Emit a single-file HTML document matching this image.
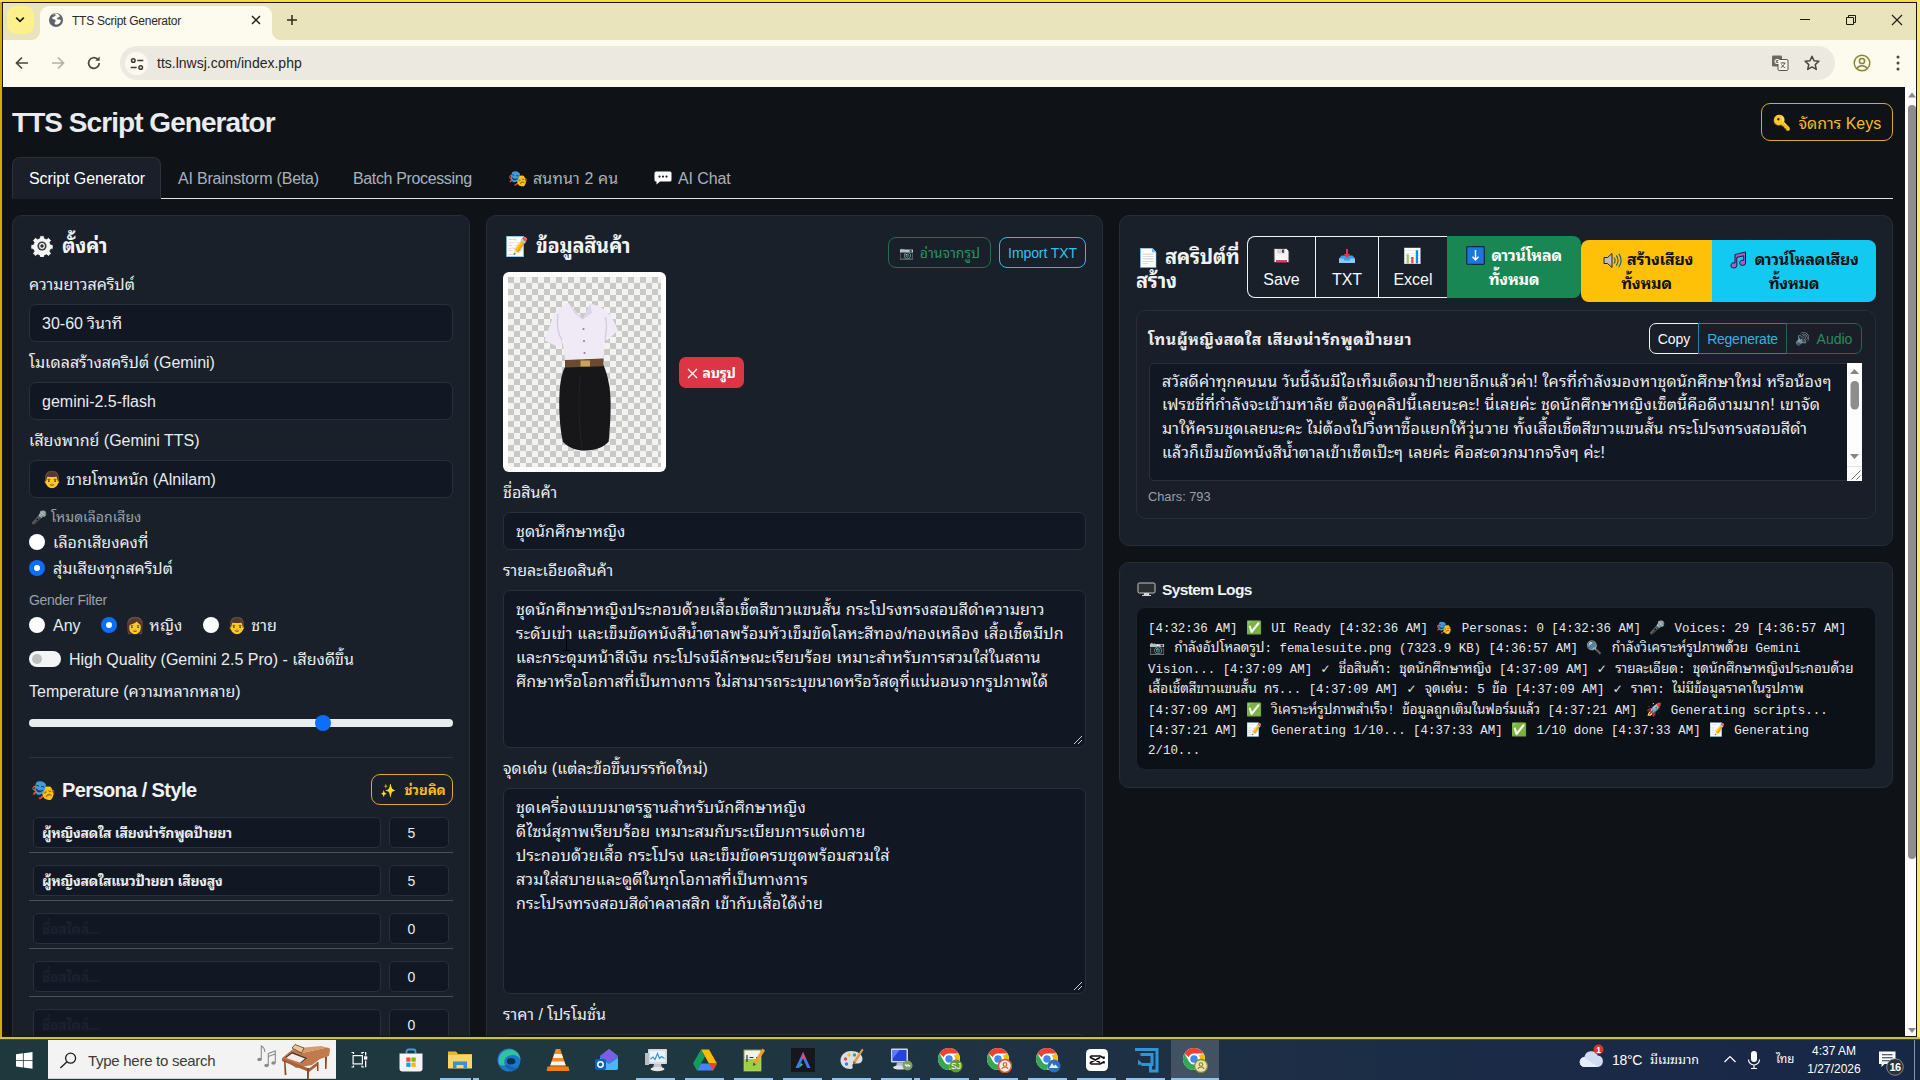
<!DOCTYPE html>
<html lang="th">
<head>
<meta charset="utf-8">
<title>TTS Script Generator</title>
<style>
*{box-sizing:border-box;margin:0;padding:0}
html,body{width:1920px;height:1080px;overflow:hidden;background:#0f1317}
body{position:relative;font-family:"Liberation Sans","Noto Sans Thai Looped","Noto Sans Thai UI","Noto Sans Thai","Loma","Noto Color Emoji",sans-serif;font-size:16px;line-height:24px;color:#e9ecef;-webkit-font-smoothing:antialiased}
.abs{position:absolute}
.em{font-family:"Noto Color Emoji","Liberation Sans",sans-serif}
svg{display:block}
svg.ic{display:inline-block}

/* ---------- window frame ---------- */
#frame-top{left:0;top:0;width:1920px;height:2px;background:#f3df3c}
#frame-left{left:0;top:2px;width:2px;height:1037px;background:#c8ae0e}
#frame-right{left:1917px;top:0;width:3px;height:1040px;background:#f6ea6e}
#frame-bottom{left:0;top:1037px;width:1920px;height:3px;background:#cabd5c;border-bottom:1px solid #4a4a2c}
#frame-in{left:2px;top:2px;width:1915px;height:1035px;border:1px solid #1a1604}

/* ---------- chrome ---------- */
#tabstrip{left:3px;top:3px;width:1913px;height:37px;background:#e9e4bc}
#toolbar{left:3px;top:40px;width:1913px;height:47px;background:#fdfaee}
#tabbtn{left:7px;top:6px;width:27px;height:28px;border-radius:9px;background:#fcf08c}
#tab{left:40px;top:6px;width:232px;height:34px;background:#fdfaee;border-radius:9px 9px 0 0}
#tab:before,#tab:after{content:"";position:absolute;bottom:0;width:8px;height:8px}
#tab:before{left:-8px;background:radial-gradient(circle at 0 0,rgba(0,0,0,0) 7.5px,#fdfaee 8px)}
#tab:after{right:-8px;background:radial-gradient(circle at 100% 0,rgba(0,0,0,0) 7.5px,#fdfaee 8px)}
#tabtitle{left:72px;top:11px;font-size:12px;line-height:20px;color:#2a2a26;white-space:nowrap;letter-spacing:-.25px}
#omni{left:120px;top:46px;width:1715px;height:34px;border-radius:17px;background:#ece9e0}
#siteinfo{left:125px;top:52px;width:23px;height:23px;border-radius:50%;background:#fbf9f1}
#url{left:157px;top:53px;font-size:14px;line-height:20px;color:#26251f;white-space:nowrap}

/* ---------- page ---------- */
#page{left:0;top:0;width:1905px;height:1037px;background:#0f1317;overflow:hidden}
#vscroll{left:1905px;top:87px;width:11px;height:949px;background:#fdfdfd}
#vthumb{left:1908px;top:105px;width:8px;height:754px;border-radius:4px;background:#8d8d8d}
h1{position:absolute;left:12px;top:103px;font-size:28px;line-height:40px;font-weight:bold;letter-spacing:-.95px;color:#e9ebee;white-space:nowrap}
.card{position:absolute;background:#1a202a;border:1px solid #272e39;border-radius:10px}
.lbl{position:absolute;margin-top:1px;white-space:nowrap;font-size:16px;line-height:24px;color:#e9ecef}
.small{font-size:14px;line-height:21px;color:#9aa1a9}
.ctl{position:absolute;background:#121724;border:1px solid #29303b;border-radius:7px;color:#e9ecef;white-space:nowrap;overflow:hidden}
.sel{height:38px;padding:7px 12px 5px;line-height:24px}
.btn{position:absolute;padding-top:2px;display:flex;align-items:center;justify-content:center;white-space:nowrap;border:1px solid transparent;border-radius:6px;font-size:14px;line-height:21px}

.h5{font-size:20px;line-height:24px;font-weight:bold;color:#f1f3f5}
.fw{font-weight:normal}
.radio{position:absolute;width:16px;height:16px;border-radius:50%;background:#fff}
.radio.on{background:#0d6efd}
.radio.on:after{content:"";position:absolute;left:5px;top:5px;width:6px;height:6px;border-radius:50%;background:#fff}
.pin{height:31px;padding:5px 8px 3px;letter-spacing:-.3px;font-size:14px;line-height:21px;font-weight:bold;border-radius:5px}
.num{text-align:center;font-weight:normal;padding-right:23px;letter-spacing:0}
.ph{color:#1c2231}
.sep{left:29px;width:424px;height:1px;background:#48505b}
.ta{padding:7px 12px 5px;line-height:24px;white-space:nowrap;letter-spacing:.17px}
.btn2{position:absolute;height:62px;padding:8px 0 0;text-align:center;white-space:nowrap;font-size:16px;line-height:24px;color:#f8f9fa}
.btn2.b{font-weight:bold;letter-spacing:-.3px}
.logbox{background:#0c1017;border:1px solid #1d232d;border-radius:9px;padding:11px 11px;font-family:"Liberation Mono","Noto Sans Thai Looped","Noto Sans Thai UI","Loma","Noto Color Emoji",monospace;font-size:12.450px;line-height:20.400px;color:#e6e9ec;white-space:nowrap;overflow:hidden}
.logbox div{height:20.400px;line-height:20.400px}
.logbox span{line-height:0}
.logbox .e{display:inline-block;font-family:"Noto Color Emoji","Liberation Sans",sans-serif;font-size:13px;width:18.800px;text-align:center}
.logbox .th{font-family:"Noto Sans Thai Looped","Noto Sans Thai UI","Loma",sans-serif;font-size:13.500px}
.logbox .ck{display:inline-block;font-family:"DejaVu Sans","Liberation Sans",sans-serif;font-size:12px;width:11.600px;text-align:center}

/* ---------- taskbar ---------- */
#taskbar{left:0;top:1040px;width:1920px;height:40px;background:linear-gradient(90deg,#1f383d 0%,#1f3740 35%,#1e3044 60%,#1a2a47 80%,#172746 100%)}
.tray{color:#fff;white-space:nowrap;line-height:20px}
</style>
</head>
<body>
<div class="abs" id="page">
<h1>TTS Script Generator</h1>
<div class="btn" style="left:1761px;top:103px;width:132px;height:38px;border-color:#d9ab2c;border-radius:9px;color:#f6bd1c;font-size:16px"><span class="em" style="font-size:15px;margin-right:7px;display:inline-block;transform:scaleX(-1)">🔑</span>จัดการ Keys</div>

<!-- nav tabs -->
<div class="abs" style="left:12px;top:198px;width:1881px;height:1px;background:#dfe3e8"></div>
<div class="abs" style="left:12px;top:157px;width:149px;height:42px;background:#1a1f2a;border:1px solid #2b323d;border-bottom-color:#1a1f2a;border-radius:8px 8px 0 0"></div>
<div class="lbl" style="left:29px;top:166px;color:#fff;letter-spacing:-.08px">Script Generator</div>
<div class="lbl" style="left:178px;top:166px;color:#a7b2bb;letter-spacing:-.2px">AI Brainstorm (Beta)</div>
<div class="lbl" style="left:353px;top:166px;color:#a7b2bb;letter-spacing:-.36px">Batch Processing</div>
<div class="lbl" style="left:508px;top:166px;color:#a7b2bb"><span class="em" style="font-size:16px">🎭</span></div>
<div class="lbl" style="left:533px;top:166px;color:#a7b2bb;letter-spacing:.1px">สนทนา 2 คน</div>
<svg class="abs" style="left:654px;top:171px" width="18" height="14" viewBox="0 0 18 14"><path d="M2 .5h14a1.500 1.500 0 0 1 1.500 1.500v7a1.500 1.500 0 0 1-1.500 1.500H6l-3.500 3v-3H2A1.500 1.500 0 0 1 .5 9V2A1.500 1.500 0 0 1 2 .5z" fill="#fff"/><circle cx="5.500" cy="5.600" r="1.100" fill="#222"/><circle cx="9" cy="5.600" r="1.100" fill="#222"/><circle cx="12.500" cy="5.600" r="1.100" fill="#222"/></svg>
<div class="lbl" style="left:678px;top:166px;color:#a7b2bb;letter-spacing:-.1px">AI Chat</div>

<!-- cards -->
<div class="card" style="left:12px;top:215px;width:458px;height:900px"></div>
<div class="card" style="left:486px;top:215px;width:617px;height:900px"></div>
<div class="card" style="left:1119px;top:215px;width:774px;height:331px"></div>
<div class="card" style="left:1119px;top:562px;width:774px;height:226px"></div>

<!-- ===== LEFT CARD ===== -->
<svg class="abs" style="left:31px;top:235px" width="22" height="22" viewBox="0 0 22 22"><g transform="translate(11 11)"><g fill="#f4f4f4" stroke="#16191f" stroke-width=".8"><path d="M-2-10.300h4l.5 2.500 1.900.8 2.100-1.400 2.800 2.800-1.400 2.100.8 1.900 2.500.5v4l-2.500.5-.8 1.900 1.400 2.100-2.800 2.800-2.100-1.400-1.900.8-.5 2.500h-4l-.5-2.500-1.900-.8-2.100 1.400-2.800-2.800 1.400-2.100-.8-1.900-2.500-.5v-4l2.500-.5.8-1.900-1.400-2.100 2.800-2.800 2.100 1.400 1.900-.8z"/></g><circle r="4.600" fill="#3a3d44"/><circle r="2.900" fill="#f4f4f4"/><circle r="1.700" fill="#2a2d33"/></g></svg>
<div class="lbl h5" style="left:62px;top:233px;letter-spacing:-.35px">ตั้งค่า</div>
<div class="lbl fw" style="left:29px;top:272px">ความยาวสคริปต์</div>
<div class="ctl sel" style="left:29px;top:304px;width:424px">30-60 วินาที</div>
<div class="lbl fw" style="left:29px;top:350px">โมเดลสร้างสคริปต์ (Gemini)</div>
<div class="ctl sel" style="left:29px;top:382px;width:424px">gemini-2.5-flash</div>
<div class="lbl fw" style="left:29px;top:428px">เสียงพากย์ (Gemini TTS)</div>
<div class="ctl sel" style="left:29px;top:460px;width:424px"><span class="em" style="font-size:16px">👨</span> ชายโทนหนัก (Alnilam)</div>

<div class="lbl small" style="left:31px;top:506px"><span class="em" style="font-size:13px">🎤</span> โหมดเลือกเสียง</div>
<div class="radio" style="left:29px;top:534px"></div>
<div class="lbl" style="left:53px;top:530px">เลือกเสียงคงที่</div>
<div class="radio on" style="left:29px;top:560px"></div>
<div class="lbl" style="left:53px;top:556px">สุ่มเสียงทุกสคริปต์</div>

<div class="lbl small" style="left:29px;top:589px;letter-spacing:-.3px">Gender Filter</div>
<div class="radio" style="left:29px;top:617px"></div>
<div class="lbl" style="left:53px;top:613px">Any</div>
<div class="radio on" style="left:101px;top:617px"></div>
<div class="lbl" style="left:125px;top:613px"><span class="em" style="font-size:16px">👩</span> หญิง</div>
<div class="radio" style="left:203px;top:617px"></div>
<div class="lbl" style="left:227px;top:613px"><span class="em" style="font-size:16px">👨</span> ชาย</div>

<div class="abs" style="left:29px;top:651px;width:32px;height:16px;border-radius:8px;background:#f4f5f6"><div class="abs" style="left:3px;top:3px;width:10px;height:10px;border-radius:50%;background:#bfbfbf"></div></div>
<div class="lbl" style="left:69px;top:647px">High Quality (Gemini 2.5 Pro) - เสียงดีขึ้น</div>

<div class="lbl" style="left:29px;top:679px">Temperature (ความหลากหลาย)</div>
<div class="abs" style="left:29px;top:719px;width:424px;height:8px;border-radius:4px;background:#e9ecef"></div>
<div class="abs" style="left:315px;top:715px;width:16px;height:16px;border-radius:50%;background:#0d6efd"></div>

<div class="abs" style="left:29px;top:757px;width:424px;height:1px;background:#2d343f"></div>

<div class="lbl h5" style="left:31px;top:777px"><span class="em" style="font-size:20px">🎭</span></div>
<div class="lbl h5" style="left:62px;top:777px;letter-spacing:-.6px">Persona / Style</div>
<div class="btn" style="left:371px;top:774px;width:82px;height:31px;border-color:#d9ab2c;border-radius:9px;color:#f6bd1c;font-weight:bold;font-size:13.500px;letter-spacing:-.1px"><span class="em" style="font-size:13px;margin-left:2px;margin-right:8px;font-weight:normal">✨</span>ช่วยคิด</div>

<div class="ctl pin" style="left:33px;top:817px;width:348px">ผู้หญิงสดใส เสียงน่ารักพูดป้ายยา</div>
<div class="ctl pin num" style="left:389px;top:817px;width:60px">5</div>
<div class="abs sep" style="top:852px"></div>
<div class="ctl pin" style="left:33px;top:865px;width:348px">ผู้หญิงสดใสแนวป้ายยา เสียงสูง</div>
<div class="ctl pin num" style="left:389px;top:865px;width:60px">5</div>
<div class="abs sep" style="top:900px"></div>
<div class="ctl pin ph" style="left:33px;top:913px;width:348px">ชื่อสไตล์...</div>
<div class="ctl pin num" style="left:389px;top:913px;width:60px">0</div>
<div class="abs sep" style="top:948px"></div>
<div class="ctl pin ph" style="left:33px;top:961px;width:348px">ชื่อสไตล์...</div>
<div class="ctl pin num" style="left:389px;top:961px;width:60px">0</div>
<div class="abs sep" style="top:996px"></div>
<div class="ctl pin ph" style="left:33px;top:1009px;width:348px">ชื่อสไตล์...</div>
<div class="ctl pin num" style="left:389px;top:1009px;width:60px">0</div>

<!-- ===== CENTER CARD ===== -->
<div class="lbl h5" style="left:505px;top:233px"><span class="em" style="font-size:19px">📝</span></div>
<div class="lbl h5" style="left:536px;top:233px;letter-spacing:-.3px">ข้อมูลสินค้า</div>
<div class="btn" style="left:888px;top:237px;width:103px;height:31px;border-color:#256f4f;border-radius:8px;color:#2b9363"><span class="em" style="font-size:12px;margin-right:6px">📷</span>อ่านจากรูป</div>
<div class="btn" style="left:999px;top:237px;width:87px;height:31px;border-color:#2fbce9;border-radius:8px;color:#35c1ee;letter-spacing:-.1px">Import TXT</div>

<div class="abs" style="left:503px;top:272px;width:163px;height:200px;background:#fff;border-radius:6px"></div>
<svg class="abs" style="left:508px;top:277px" width="153" height="190" viewBox="0 0 153 190">
<defs><pattern id="chk" width="12" height="12" patternUnits="userSpaceOnUse"><rect width="12" height="12" fill="#f3f3f1"/><rect width="6" height="6" fill="#c9c9c7"/><rect x="6" y="6" width="6" height="6" fill="#c9c9c7"/></pattern></defs>
<rect width="153" height="190" fill="url(#chk)"/>
<!-- skirt -->
<path d="M57 90 C53 98 51.500 108 51.200 125 C51.200 140 52.500 155 55 165 C62 172 70 173.500 78 173.500 C88 173.500 96 170 100.700 164.500 C102 150 102.800 138 102.600 125 C102.300 112 100.500 100 95.500 88 Z" fill="#17171a"/>
<path d="M72 100 C70 125 71 150 74 171" stroke="#222226" stroke-width="1.200" fill="none"/>
<!-- shirt -->
<path d="M60.400 26 L52 31 C48 33.500 46 36 45 40 C42 48 39 56 36.600 63.500 L52 71 L54 63 C55.500 70 56.500 76 57 83 L95.500 81.600 C96 74 96.500 68 97 61.500 L99 63.500 L110 53.500 C107 46 104 40 100 36 C97 32.500 93 30 89 28.500 L82.200 26.500 L74.700 42.500 Z" fill="#efeaf6"/>
<path d="M60.400 26 L74.700 42.500 L67 37 Z M82.200 26.500 L74.700 42.500 L84 36 Z" fill="#dcd5e9"/>
<path d="M50 37 C48.500 48 50.500 58 54 63 M97.500 40 C99 48 98.500 55 97 61.500" stroke="#d3cce0" stroke-width="1.400" fill="none"/>
<circle cx="75.500" cy="52" r="1.100" fill="#8a8494"/><circle cx="76" cy="64" r="1.100" fill="#8a8494"/><circle cx="76.500" cy="76" r="1.100" fill="#8a8494"/>
<!-- belt -->
<path d="M57 83 L95.500 81.600 L95.500 89.300 L57 90.500 Z" fill="#6b4a32"/>
<rect x="72.500" y="83.500" width="9.500" height="6" fill="#c9a55c"/>
</svg>
<div class="btn" style="left:679px;top:357px;width:65px;height:31px;background:#dc3545;color:#fff;border-radius:7px;font-weight:bold;letter-spacing:-.3px"><svg width="11" height="11" viewBox="0 0 11 11" style="margin-right:4px"><path d="M1 1l9 9M10 1l-9 9" stroke="#fff" stroke-width="1.300"/></svg>ลบรูป</div>

<div class="lbl" style="left:503px;top:480px">ชื่อสินค้า</div>
<div class="ctl sel" style="left:503px;top:512px;width:583px">ชุดนักศึกษาหญิง</div>
<div class="lbl" style="left:503px;top:558px">รายละเอียดสินค้า</div>
<div class="ctl ta" style="left:503px;top:590px;width:583px;height:158px">ชุดนักศึกษาหญิงประกอบด้วยเสื้อเชิ้ตสีขาวแขนสั้น กระโปรงทรงสอบสีดำความยาว<br>ระดับเข่า และเข็มขัดหนังสีน้ำตาลพร้อมหัวเข็มขัดโลหะสีทอง/ทองเหลือง เสื้อเชิ้ตมีปก<br>และกระดุมหน้าสีเงิน กระโปรงมีลักษณะเรียบร้อย เหมาะสำหรับการสวมใส่ในสถาน<br>ศึกษาหรือโอกาสที่เป็นทางการ ไม่สามารถระบุขนาดหรือวัสดุที่แน่นอนจากรูปภาพได้</div>
<svg class="abs" style="left:1073px;top:735px" width="10" height="10" viewBox="0 0 10 10"><path d="M9 1L1 9M9 5L5 9" stroke="#c9ced4" stroke-width="1"/></svg>
<div class="lbl" style="left:503px;top:756px">จุดเด่น (แต่ละข้อขึ้นบรรทัดใหม่)</div>
<div class="ctl ta" style="left:503px;top:788px;width:583px;height:206px">ชุดเครื่องแบบมาตรฐานสำหรับนักศึกษาหญิง<br>ดีไซน์สุภาพเรียบร้อย เหมาะสมกับระเบียบการแต่งกาย<br>ประกอบด้วยเสื้อ กระโปรง และเข็มขัดครบชุดพร้อมสวมใส่<br>สวมใส่สบายและดูดีในทุกโอกาสที่เป็นทางการ<br>กระโปรงทรงสอบสีดำคลาสสิก เข้ากับเสื้อได้ง่าย</div>
<svg class="abs" style="left:1073px;top:981px" width="10" height="10" viewBox="0 0 10 10"><path d="M9 1L1 9M9 5L5 9" stroke="#c9ced4" stroke-width="1"/></svg>
<div class="lbl" style="left:503px;top:1002px">ราคา / โปรโมชั่น</div>
<div class="ctl sel" style="left:503px;top:1034px;width:583px"></div>

<!-- ===== RIGHT TOP CARD ===== -->
<div class="lbl h5" style="left:1137px;top:244px"><span class="em" style="font-size:18px">📄</span></div>
<div class="lbl h5" style="left:1165px;top:244px;letter-spacing:-.3px">สคริปต์ที่</div>
<div class="lbl h5" style="left:1136px;top:268px;letter-spacing:-.3px">สร้าง</div>

<div class="abs" style="left:1247px;top:236px;width:201px;height:62px;border:1px solid #f1f3f5;border-right:0;border-radius:8px 0 0 8px"></div>
<div class="abs" style="left:1315px;top:237px;width:1px;height:60px;background:#f1f3f5"></div>
<div class="abs" style="left:1378px;top:237px;width:1px;height:60px;background:#f1f3f5"></div>
<svg class="abs" style="left:1273px;top:247px" width="17" height="17" viewBox="0 0 17 17"><path d="M1 1.500h12.500L16 4v11.500H1z" fill="#f4f4f6" stroke="#3a3340" stroke-width="1"/><rect x="4" y="2" width="8" height="4.500" fill="#d7d3dc"/><rect x="9" y="2.600" width="2" height="3.200" fill="#4a4450"/><rect x="3" y="9.500" width="11" height="5.500" fill="#fff"/><rect x="3" y="13" width="11" height="2.300" fill="#e0406a"/></svg>
<div class="btn2" style="left:1248px;top:236px;width:67px"><br>Save</div>
<svg class="abs" style="left:1338px;top:249px" width="18" height="15" viewBox="0 0 18 15"><path d="M1 9.500L3.500 6.500h11L17 9.500V14H1z" fill="#3a9be6"/><path d="M1 9.500h4.500l1 2h5l1-2H17V14H1z" fill="#8cc9f5"/><path d="M8 0h2v5h2.300L9 9 5.700 5H8z" fill="#e2383f"/></svg>
<div class="btn2" style="left:1316px;top:236px;width:62px"><br>TXT</div>
<div class="btn2" style="left:1379px;top:236px;width:68px"><span class="em" style="font-size:15px">📊</span><br>Excel</div>
<div class="btn2 b" style="left:1447px;top:236px;width:134px;background:#198754;border-radius:0 8px 8px 0;color:#fff"><svg class="ic" width="19" height="19" viewBox="0 0 19 19" style="vertical-align:-4px;margin-right:2px"><rect x=".7" y=".7" width="17.600" height="17.600" rx="1" fill="#1b78d8" stroke="#0b2a4d" stroke-width="1.200"/><path d="M9.500 4v9.500M6.500 10.800l3 3.200 3-3.200" fill="none" stroke="#fff" stroke-width="1.400"/></svg> ดาวน์โหลด<br>ทั้งหมด</div>
<div class="btn2 b" style="left:1581px;top:240px;width:131px;background:#ffc107;border-radius:8px 0 0 8px;color:#111"><svg class="ic" width="19" height="17" viewBox="0 0 19 17" style="vertical-align:-4px;margin-left:3px;margin-right:1px"><path d="M1 5.500h3.500L9 1.500v14L4.500 11.500H1z" fill="#bdbdbd" stroke="#222" stroke-width="1"/><path d="M11 5.500c1.300 1.700 1.300 4.300 0 6M13.300 3.500c2.300 2.800 2.300 7.200 0 10M15.700 1.800c3.200 3.800 3.200 9.600 0 13.400" fill="none" stroke="#1f5f86" stroke-width="1.200"/></svg> สร้างเสียง<br>ทั้งหมด</div>
<div class="btn2 b" style="left:1712px;top:240px;width:164px;background:#12caf1;border-radius:0 8px 8px 0;color:#111"><svg class="ic" width="19" height="18" viewBox="0 0 19 18" style="vertical-align:-4px;margin-right:2px"><path d="M6 3.500l10.500-2.500v10.800a2.900 2.600 0 1 1-1.800-2.400V4.800L7.800 6.400v8a2.900 2.600 0 1 1-1.800-2.400z" fill="#9a62d2" stroke="#24142f" stroke-width="1" stroke-linejoin="round"/></svg> ดาวน์โหลดเสียง<br>ทั้งหมด</div>

<div class="abs" style="left:1136px;top:310px;width:740px;height:209px;border:1px solid #272e39;border-radius:10px;background:#191e29"></div>
<div class="lbl" style="left:1148px;top:327px;font-weight:bold;letter-spacing:.42px">โทนผู้หญิงสดใส เสียงน่ารักพูดป้ายยา</div>
<div class="btn" style="left:1649px;top:323px;width:50px;height:31px;border-color:#f1f3f5;border-radius:7px 0 0 7px;color:#f8f9fa">Copy</div>
<div class="btn" style="left:1698px;top:323px;width:89px;height:31px;border-color:#1c88a6;border-radius:0;color:#2db5dc;letter-spacing:-.25px">Regenerate</div>
<div class="btn" style="left:1786px;top:323px;width:76px;height:31px;border-color:#1d6a4b;border-radius:0 7px 7px 0;color:#2a8c60"><span class="em" style="font-size:12px;margin-right:6px;opacity:.75">🔊</span>Audio</div>

<div class="ctl" style="left:1149px;top:363px;width:713px;height:118px;padding:5.500px 12px;font-size:16px;line-height:23.700px;letter-spacing:.15px;border-radius:5px">สวัสดีค่าทุกคนนน วันนี้ฉันมีไอเท็มเด็ดมาป้ายยาอีกแล้วค่า! ใครที่กำลังมองหาชุดนักศึกษาใหม่ หรือน้องๆ<br>เฟรชชี่ที่กำลังจะเข้ามหาลัย ต้องดูคลิปนี้เลยนะคะ! นี่เลยค่ะ ชุดนักศึกษาหญิงเซ็ตนี้คือดีงามมาก! เขาจัด<br>มาให้ครบชุดเลยนะคะ ไม่ต้องไปวิ่งหาซื้อแยกให้วุ่นวาย ทั้งเสื้อเชิ้ตสีขาวแขนสั้น กระโปรงทรงสอบสีดำ<br>แล้วก็เข็มขัดหนังสีน้ำตาลเข้าเซ็ตเป๊ะๆ เลยค่ะ คือสะดวกมากจริงๆ ค่ะ!</div>
<div class="abs" style="left:1847px;top:363px;width:15px;height:118px;background:#fdfdfd"></div>
<svg class="abs" style="left:1847px;top:363px" width="15" height="118" viewBox="0 0 15 118"><path d="M3 11L7.500 6 12 11zM3 91L7.500 96 12 91z" fill="#858585"/><rect x="3.500" y="18" width="8.500" height="28.500" rx="4.200" fill="#8d8d8d"/><path d="M0 103.500h15" stroke="#e4e4e4" stroke-width="1"/><path d="M13.500 107.500L4.500 116.500M13.500 112.500L9.500 116.500" stroke="#6f6f6f" stroke-width="1"/></svg>
<div class="lbl" style="left:1148px;top:486px;font-size:12.800px;line-height:20px;color:#99a0a8">Chars: 793</div>

<!-- ===== SYSTEM LOGS ===== -->
<svg class="abs" style="left:1137px;top:582px" width="19" height="15" viewBox="0 0 19 15"><rect x="1" y="1" width="17" height="10" rx="1.200" fill="#2b2e31" stroke="#c4c4c4" stroke-width="1"/><path d="M7.500 11.500h4v1.500h-4zM5 13.500h9" stroke="#d6d6d6" stroke-width="1.200" fill="#d6d6d6"/></svg>
<div class="lbl" style="left:1162px;top:577px;font-size:15.500px;font-weight:bold;letter-spacing:-.6px;color:#f1f3f5">System Logs</div>
<div class="abs logbox" style="left:1136px;top:607px;width:740px;height:163px">
<div>[4:32:36 AM] <span class="e">✅</span> UI Ready [4:32:36 AM] <span class="e">🎭</span> Personas: 0 [4:32:36 AM] <span class="e">🎤</span> Voices: 29 [4:36:57 AM]</div>
<div><span class="e">📷</span> <span class="th">กำลังอัปโหลดรูป</span>: femalesuite.png (7323.9 KB) [4:36:57 AM] <span class="e">🔍</span> <span class="th">กำลังวิเคราะห์รูปภาพด้วย</span> Gemini</div>
<div>Vision... [4:37:09 AM] <span class="ck">✓</span> <span class="th">ชื่อสินค้า</span>: <span class="th">ชุดนักศึกษาหญิง</span> [4:37:09 AM] <span class="ck">✓</span> <span class="th">รายละเอียด</span>: <span class="th">ชุดนักศึกษาหญิงประกอบด้วย</span></div>
<div><span class="th">เสื้อเชิ้ตสีขาวแขนสั้น</span> <span class="th">กร</span>... [4:37:09 AM] <span class="ck">✓</span> <span class="th">จุดเด่น</span>: 5 <span class="th">ข้อ</span> [4:37:09 AM] <span class="ck">✓</span> <span class="th">ราคา</span>: <span class="th">ไม่มีข้อมูลราคาในรูปภาพ</span></div>
<div>[4:37:09 AM] <span class="e">✅</span> <span class="th">วิเคราะห์รูปภาพสำเร็จ</span>! <span class="th">ข้อมูลถูกเติมในฟอร์มแล้ว</span> [4:37:21 AM] <span class="e">🚀</span> Generating scripts...</div>
<div>[4:37:21 AM] <span class="e">📝</span> Generating 1/10... [4:37:33 AM] <span class="e">✅</span> 1/10 done [4:37:33 AM] <span class="e">📝</span> Generating</div>
<div>2/10...</div>
</div>
<!-- text cursor (I-beam) -->
<div class="abs" style="left:566px;top:633px;width:1px;height:17px;background:#000"></div>
<div class="abs" style="left:563px;top:650px;width:7px;height:1px;background:#000"></div>
</div>
<div class="abs" id="tabstrip"></div>
<div class="abs" id="toolbar"></div>
<div class="abs" id="vscroll"></div>
<div class="abs" id="vthumb"></div>
<svg class="abs" style="left:1905px;top:87px" width="11" height="949" viewBox="0 0 11 949"><path d="M3 10.500L7 5.500 11 10.500zM3 941L7 946 11 941z" fill="#8a8a8a"/></svg>
<div class="abs" id="tabbtn"></div>
<svg class="abs" style="left:14px;top:15px" width="12" height="10" viewBox="0 0 12 10"><path d="M2.2 2.6 L6 6.4 L9.8 2.6" fill="none" stroke="#1d1b10" stroke-width="1.7"/></svg>
<div class="abs" id="tab"></div>
<svg class="abs" style="left:48px;top:12px" width="16" height="16" viewBox="0 0 16 16"><circle cx="8" cy="8" r="7" fill="#5f6370"/><path d="M4.2 3.2c1.2-.9 2.7-1.1 3.3-.6.7.6-.2 1.500-1.100 2-.9.500-1.800.4-2.200 1.200-.4.800.5 1.400 1.600 1.500 1.100.1 1.900.6 1.800 1.600-.1 1-1.100 1.300-1 2.300.1.800.700 1.300 1.400 1.500 2.600-.1 4.600-2 5-4.500-.500-.7-1.300-.9-2.100-.7-.9.200-1.700-.2-1.800-1-.1-.8.700-1.200 1.500-1.300.8-.1 1.300-.6 1.100-1.300C10.600 2 9.300 1.500 8 1.500c-1.500 0-2.800.6-3.800 1.700z" fill="#fdfaee"/></svg>
<div class="abs" id="tabtitle">TTS Script Generator</div>
<svg class="abs" style="left:250px;top:14px" width="12" height="12" viewBox="0 0 12 12"><path d="M2 2l8 8M10 2l-8 8" stroke="#25231a" stroke-width="1.5"/></svg>
<svg class="abs" style="left:285px;top:13px" width="14" height="14" viewBox="0 0 14 14"><path d="M7 2v10M2 7h10" stroke="#2b2a20" stroke-width="1.5"/></svg>
<svg class="abs" style="left:1799px;top:13px" width="12" height="12" viewBox="0 0 12 12"><path d="M1 6.500h10" stroke="#1b1a12" stroke-width="1"/></svg>
<svg class="abs" style="left:1845px;top:14px" width="12" height="12" viewBox="0 0 12 12"><path d="M1.500 3.500h7v7h-7zM3.500 3.500v-2h7v7h-2" fill="none" stroke="#1b1a12" stroke-width="1"/></svg>
<svg class="abs" style="left:1891px;top:14px" width="12" height="12" viewBox="0 0 12 12"><path d="M1 1l10 10M11 1L1 11" stroke="#1b1a12" stroke-width="1.100"/></svg>

<svg class="abs" style="left:14px;top:55px" width="16" height="16" viewBox="0 0 16 16"><path d="M14 8H3M8 2.500L2.500 8 8 13.500" fill="none" stroke="#4a4838" stroke-width="1.700"/></svg>
<svg class="abs" style="left:50px;top:55px" width="16" height="16" viewBox="0 0 16 16"><path d="M2 8h11M8 2.500L13.500 8 8 13.500" fill="none" stroke="#b3b1a4" stroke-width="1.700"/></svg>
<svg class="abs" style="left:86px;top:55px" width="16" height="16" viewBox="0 0 16 16"><path d="M13.200 8A5.300 5.300 0 1 1 11.600 4.200" fill="none" stroke="#4a4838" stroke-width="1.700"/><path d="M13.600 1.600v4.200H9.400z" fill="#4a4838"/></svg>
<div class="abs" id="omni"></div>
<div class="abs" id="siteinfo"></div>
<svg class="abs" style="left:129px;top:56px" width="16" height="16" viewBox="0 0 16 16"><g fill="none" stroke="#3d3b2e" stroke-width="1.500"><circle cx="4.300" cy="4.500" r="1.800"/><path d="M8.300 4.500h6"/><circle cx="11.700" cy="11.500" r="1.800"/><path d="M1.700 11.500h6"/></g></svg>
<div class="abs" id="url">tts.lnwsj.com/index.php</div>
<svg class="abs" style="left:1771px;top:54px" width="18" height="18" viewBox="0 0 18 18"><rect x="1" y="1.500" width="10" height="11" rx="1.200" fill="#6b6a62"/><rect x="7" y="5.500" width="10" height="11" rx="1.200" fill="#f7f5ec" stroke="#55544c" stroke-width="1"/><text x="3.200" y="10" font-size="7.500" font-weight="bold" fill="#fff" font-family="Liberation Sans,sans-serif">G</text><path d="M9.500 9h5M12 8v1M13.700 9c-.5 2-2 3.700-4 4.700M10.500 10.500c.8 1.500 2 2.700 3.700 3.300" stroke="#55544c" stroke-width=".9" fill="none"/></svg>
<svg class="abs" style="left:1803px;top:54px" width="18" height="18" viewBox="0 0 18 18"><path d="M9 2.300l2 4.500 4.900.5-3.700 3.300 1.100 4.800L9 12.900l-4.300 2.500 1.100-4.800L2.100 7.300l4.900-.5z" fill="none" stroke="#4a4838" stroke-width="1.500" stroke-linejoin="round"/></svg>
<svg class="abs" style="left:1852px;top:53px" width="20" height="20" viewBox="0 0 20 20"><g fill="none" stroke="#8a8535" stroke-width="1.500"><circle cx="10" cy="10" r="7.800"/><circle cx="10" cy="8" r="2.600"/><path d="M4.800 15.600c1.200-2 3-2.900 5.200-2.900s4 .9 5.200 2.900"/></g></svg>
<svg class="abs" style="left:1895px;top:54px" width="6" height="18" viewBox="0 0 6 18"><g fill="#4a4838"><circle cx="3" cy="3" r="1.500"/><circle cx="3" cy="9" r="1.500"/><circle cx="3" cy="15" r="1.500"/></g></svg>


<div class="abs" id="taskbar"></div>
<svg class="abs" style="left:16px;top:1052px" width="17" height="17" viewBox="0 0 17 17"><path d="M0 2.300L6.900 1.300V8H0zM7.700 1.200L16.500 0V8H7.700zM0 8.800H6.900V15.500L0 14.500zM7.700 8.800H16.500V16.800L7.700 15.600z" fill="#fff"/></svg>
<div class="abs" style="left:48px;top:1040px;width:288px;height:39px;background:#f3f3f3;border-bottom:1px solid #cfcfcf"></div>
<svg class="abs" style="left:58px;top:1050px" width="20" height="20" viewBox="0 0 20 20"><circle cx="12.600" cy="8.200" r="5" fill="none" stroke="#1f1f1f" stroke-width="1.300"/><path d="M9 11.800L2.400 18" stroke="#1f1f1f" stroke-width="1.400"/></svg>
<div class="abs" style="left:88px;top:1051px;font-size:15px;line-height:20px;letter-spacing:-.28px;color:#3b3b3b;white-space:nowrap">Type here to search</div>
<svg class="abs" style="left:255px;top:1042px" width="80" height="38" viewBox="0 0 80 38"><g fill="#8b8b8b" stroke="#8b8b8b"><ellipse cx="4.500" cy="17.500" rx="2.300" ry="1.800" stroke="none"/><path d="M6.300 17.500V4c2 1 3.500 3 3.500 6" fill="none" stroke-width="1.100"/><ellipse cx="11.500" cy="23.500" rx="2.200" ry="1.700" stroke="none"/><ellipse cx="18.500" cy="21" rx="2.200" ry="1.700" stroke="none"/><path d="M13.300 23.500V11.500l7-2.500V21M13.300 14.500l7-2.500" fill="none" stroke-width="1.100"/></g><path d="M27 16L38 7l9 4 25-5.500c2 0 3 1 3 2.500l-1 6-9 3-8 6-16 3z" fill="#c07a4e"/><path d="M38 7l9 4 25-5.500-6-1.500-22 2z" fill="#d99a6c"/><path d="M27 16l27 10.500 8-6 .5 3-8.500 6.500L27 19z" fill="#a9623a"/><path d="M30 15.500l7-5.500 15 6-6 5z" fill="#3b3330"/><path d="M31 16l6-4.600 13 5.200-5 4.200z" fill="#f1ece6"/><path d="M37 6l3-3.500 9 3.500-2.500 5z" fill="#e9c98f" stroke="#5a3a22" stroke-width=".8"/><path d="M29 19l1.500 0 1 14-1.800 0zM52 26l2.200 0 -.4 11-1.800 0zM70 15l2 0-.5 12-1.500 0zM62 20l1.500 0 0 9-1.500 0z" fill="#8a4a2a"/></svg>
<svg class="abs" style="left:351px;top:1051px" width="18" height="18" viewBox="0 0 18 18"><g fill="none" stroke="#fff" stroke-width="1.200"><rect x="2.100" y="4.600" width="9.300" height="8.300"/><path d="M.5 1.500h2v1.600M13 1.500h-2v1.600M.5 16h2v-1.600M13 16h-2v-1.600"/></g><rect x="14" y="1" width="1.300" height="3.500" fill="#fff"/><rect x="13" y="5.300" width="3.300" height="3.300" fill="#fff"/><rect x="14" y="9.600" width="1.300" height="6.600" fill="#fff"/></svg>
<svg class="abs" style="left:397.5px;top:1047px" width="26" height="26" viewBox="0 0 26 26"><path d="M8.500 6.500V4.500a2 2 0 0 1 2-2h5a2 2 0 0 1 2 2v2" fill="none" stroke="#3aa3dc" stroke-width="1.800"/><path d="M1.500 6.500h23v15a3 3 0 0 1-3 3h-17a3 3 0 0 1-3-3z" fill="#f4f4f4"/><rect x="8.300" y="10.500" width="4.200" height="4.200" fill="#f25022"/><rect x="13.500" y="10.500" width="4.200" height="4.200" fill="#7fba00"/><rect x="8.300" y="15.700" width="4.200" height="4.200" fill="#00a4ef"/><rect x="13.500" y="15.700" width="4.200" height="4.200" fill="#ffb900"/></svg>
<svg class="abs" style="left:447px;top:1047px" width="26" height="26" viewBox="0 0 26 26"><path d="M1 4.500h8l2 2.500h14v14H1z" fill="#e9b634"/><path d="M1 8h24v13.500H1z" fill="#f7d566"/><path d="M6 14.500h14v7h-3.500v-3.500h-7v3.500H6z" fill="#3d8fd1"/></svg>
<svg class="abs" style="left:495.5px;top:1047px" width="26" height="26" viewBox="0 0 26 26"><circle cx="13" cy="13" r="11.500" fill="#1b78c8"/><path d="M3 17C1 9 7 2 14 2.500c6 .5 10 5 10.500 10-2-4-7-5.500-11-4C9 10 7 14 9 18c-2 1-4.500.5-6-1z" fill="#33c2a0"/><path d="M12.500 11.500c3-1.500 7 0 7 3 0 2-2 3-5 3-1.500 0-2.500-.5-3.200-1.500-.8-1.500-.3-3.500 1.200-4.500z" fill="#0d2f55"/><path d="M9 18c1.500 4 6 6.500 11 4.500 1.500-.7 2.500-1.500 3.300-2.700-3 1.500-8 1.200-10.300-1.800z" fill="#1560b0"/></svg>
<svg class="abs" style="left:544.5px;top:1047px" width="26" height="26" viewBox="0 0 26 26"><path d="M10.800 2h4.400l6 17.500H4.800z" fill="#f58a1f"/><path d="M9.300 7h7.400l1.300 4H8zM6.700 14.500h12.600l1.200 3.500H5.500z" fill="#f4f4f4"/><path d="M2.500 19.500h21l1 4.500h-23z" fill="#f07c12"/></svg>
<svg class="abs" style="left:593.5px;top:1047px" width="26" height="26" viewBox="0 0 26 26"><path d="M6 9l9-7 9 7v12a2 2 0 0 1-2 2H8a2 2 0 0 1-2-2z" fill="#2a7fe0"/><path d="M6 9l9-7 9 7-9 6z" fill="#7b5fe0"/><path d="M6 11l9 6 9-6v10a2 2 0 0 1-2 2H8a2 2 0 0 1-2-2z" fill="#4fb4f2"/><rect x="1" y="12" width="11" height="11" rx="2" fill="#0f5fc2"/><circle cx="6.500" cy="17.500" r="2.700" fill="none" stroke="#fff" stroke-width="1.500"/></svg>
<svg class="abs" style="left:642.5px;top:1047px" width="26" height="26" viewBox="0 0 26 26"><rect x="5" y="2" width="19" height="15" rx="1" fill="#d7dbe0"/><rect x="7" y="4" width="15" height="11" fill="#eaf2fb"/><path d="M7.500 12l2.500-2 2 2.500 2.500-6 2 5 2-2 3 2" fill="none" stroke="#3c8fd6" stroke-width="1.200"/><rect x="2" y="6" width="4" height="12" fill="#b9bec5"/><path d="M11 17h7l1 4H10z" fill="#c3c7cc"/><ellipse cx="14.500" cy="22" rx="7" ry="2.200" fill="#e2e4e7"/></svg>
<svg class="abs" style="left:691.5px;top:1047px" width="26" height="26" viewBox="0 0 26 26"><path d="M9 2.500h8l8 14h-8z" fill="#fbbc04"/><path d="M9 2.500L1 16.500l4 7 8-14z" fill="#0f9d58"/><path d="M9 16.500h16l-4 7H5z" fill="#4285f4"/><path d="M17 16.500h8l-4 7z" fill="#ea4335"/></svg>
<svg class="abs" style="left:740.5px;top:1047px" width="26" height="26" viewBox="0 0 26 26"><rect x="3" y="3" width="17" height="21" fill="#f2f2e9" stroke="#8aa04a" stroke-width="1"/><rect x="3.500" y="12" width="16" height="11.500" fill="#9bd23c"/><path d="M6 8v7M8.500 10.500h4M15 10.500h2" stroke="#333" stroke-width="1.200"/><path d="M21.500 1.500l2.500 2-9 14-3 1.500.5-3.500z" fill="#f0a030"/><path d="M12 19l.5-3.500 2.500 2z" fill="#444"/></svg>
<svg class="abs" style="left:789.5px;top:1047px" width="26" height="26" viewBox="0 0 26 26"><rect x="1" y="1" width="24" height="24" fill="#15171c"/><path d="M13 5l7.500 16h-3.200L13 11.500 8.700 21H5.500z" fill="#3e7be6"/><path d="M13 5l3.500 7.500L13 11.500 11 14z" fill="#e8437a"/><path d="M8.700 21l2.300-5 2 1.500z" fill="#3ac7a2"/></svg>
<svg class="abs" style="left:838.5px;top:1047px" width="26" height="26" viewBox="0 0 26 26"><path d="M12 4C5.500 4 1.500 8.500 1.500 13.500S6 22 11.500 22c2 0 2.500-1.200 2-2.500-.6-1.600.3-3 2.200-3h3c3 0 4.800-2 4.800-4.500C23.500 7.500 18.500 4 12 4z" fill="#d9dfe6"/><circle cx="6.500" cy="12" r="1.700" fill="#e04a3a"/><circle cx="10" cy="8" r="1.700" fill="#f3c12b"/><circle cx="15.500" cy="8" r="1.700" fill="#38a45a"/><circle cx="7.500" cy="17" r="1.700" fill="#3b7ddd"/><path d="M23 1.500l1.500 1.500-8 13-2.500 1 .5-2.800z" fill="#e39a45"/><path d="M14 17l.5-2.800 2 1.800z" fill="#7a4a22"/></svg>
<svg class="abs" style="left:887.5px;top:1047px" width="26" height="26" viewBox="0 0 26 26"><rect x="3" y="1.500" width="17" height="14" rx="1" fill="#cfd6de"/><rect x="4.500" y="3" width="14" height="11" fill="#2444d8"/><path d="M4.500 3h7l-7 9z" fill="#5a7df5"/><path d="M9 15.500h6l1 4H8z" fill="#b8bec6"/><ellipse cx="12" cy="20.500" rx="7" ry="2" fill="#dfe3e7"/><circle cx="19.500" cy="18.500" r="5" fill="#7da06a"/><path d="M17 17.500l2.500 2M22 19.500l-2.500-2" stroke="#fff" stroke-width="1.200"/></svg>
<svg class="abs" style="left:936.5px;top:1047px" width="26" height="26" viewBox="0 0 26 26"><circle cx="12" cy="12" r="11" fill="#fff"/><path d="M12 1a11 11 0 0 1 9.500 5.500H12a5.500 5.500 0 0 0-5.200 3.700L2.500 6.500A11 11 0 0 1 12 1z" fill="#ea4335"/><path d="M21.500 6.500A11 11 0 0 1 12.500 23l4.700-8.200a5.500 5.500 0 0 0-.4-6.300z" fill="#fbbc05"/><path d="M12.500 23A11 11 0 0 1 2.500 6.500l4.700 8.200a5.500 5.500 0 0 0 5.800 2.700z" fill="#34a853"/><circle cx="12" cy="12" r="4.300" fill="#4285f4" stroke="#fff" stroke-width="1.200"/><circle cx="19" cy="19" r="6.500" fill="#5f9e2f"/><text x="19" y="22.300" font-size="8.500" fill="#fff" text-anchor="middle" font-family="Liberation Sans,sans-serif">SJ</text></svg>
<svg class="abs" style="left:985.5px;top:1047px" width="26" height="26" viewBox="0 0 26 26"><circle cx="12" cy="12" r="11" fill="#fff"/><path d="M12 1a11 11 0 0 1 9.500 5.500H12a5.500 5.500 0 0 0-5.200 3.700L2.500 6.500A11 11 0 0 1 12 1z" fill="#ea4335"/><path d="M21.500 6.500A11 11 0 0 1 12.500 23l4.700-8.200a5.500 5.500 0 0 0-.4-6.300z" fill="#fbbc05"/><path d="M12.500 23A11 11 0 0 1 2.500 6.500l4.700 8.200a5.500 5.500 0 0 0 5.800 2.700z" fill="#34a853"/><circle cx="12" cy="12" r="4.300" fill="#4285f4" stroke="#fff" stroke-width="1.200"/><circle cx="19" cy="19" r="6.500" fill="#f4ede4" stroke="#d9541e" stroke-width="1.500"/><circle cx="19" cy="17.500" r="1.800" fill="none" stroke="#d9541e" stroke-width="1.100"/><path d="M15.800 22c.8-1.500 2-2 3.200-2s2.400.5 3.200 2" fill="none" stroke="#d9541e" stroke-width="1.100"/></svg>
<svg class="abs" style="left:1034.5px;top:1047px" width="26" height="26" viewBox="0 0 26 26"><circle cx="12" cy="12" r="11" fill="#fff"/><path d="M12 1a11 11 0 0 1 9.500 5.500H12a5.500 5.500 0 0 0-5.200 3.700L2.500 6.500A11 11 0 0 1 12 1z" fill="#ea4335"/><path d="M21.500 6.500A11 11 0 0 1 12.500 23l4.700-8.200a5.500 5.500 0 0 0-.4-6.300z" fill="#fbbc05"/><path d="M12.500 23A11 11 0 0 1 2.500 6.500l4.700 8.200a5.500 5.500 0 0 0 5.800 2.700z" fill="#34a853"/><circle cx="12" cy="12" r="4.300" fill="#4285f4" stroke="#fff" stroke-width="1.200"/><circle cx="19" cy="19" r="6.500" fill="#2f6fb5"/><path d="M14 21l3-5 2 3 1.500-1.500 3 3.500z" fill="#e9eef5"/></svg>
<svg class="abs" style="left:1083.5px;top:1047px" width="26" height="26" viewBox="0 0 26 26"><rect x="2" y="2" width="22" height="22" rx="4.500" fill="#fff"/><path d="M6.500 9h9.500l4 2.200V9.500M6.500 17h9.500l4-2.200V16.500M6.500 9v1.500l9.500 5M6.500 17v-1.500l9.500-5" fill="none" stroke="#111" stroke-width="1.700" stroke-linejoin="round"/></svg>
<svg class="abs" style="left:1132.5px;top:1047px" width="26" height="26" viewBox="0 0 26 26"><path d="M2 2.500h22V24h-6.500v-6.500H8.500" fill="none" stroke="#2f95d6" stroke-width="3"/><path d="M7.500 7.500h11.500v11.500" fill="none" stroke="#2f95d6" stroke-width="3"/><path d="M5 12.500l6 5.200H5z" fill="#2f95d6"/></svg>
<div class="abs" style="left:1171px;top:1040px;width:48px;height:40px;background:rgba(255,255,255,.17)"></div>
<svg class="abs" style="left:1181.5px;top:1047px" width="26" height="26" viewBox="0 0 26 26"><circle cx="12" cy="12" r="11" fill="#fff"/><path d="M12 1a11 11 0 0 1 9.500 5.500H12a5.500 5.500 0 0 0-5.200 3.700L2.500 6.500A11 11 0 0 1 12 1z" fill="#ea4335"/><path d="M21.500 6.500A11 11 0 0 1 12.500 23l4.700-8.200a5.500 5.500 0 0 0-.4-6.300z" fill="#fbbc05"/><path d="M12.500 23A11 11 0 0 1 2.500 6.500l4.700 8.200a5.500 5.500 0 0 0 5.800 2.700z" fill="#34a853"/><circle cx="12" cy="12" r="4.300" fill="#4285f4" stroke="#fff" stroke-width="1.200"/><circle cx="19" cy="19" r="6.500" fill="#e8e3b0" stroke="#8a8535" stroke-width="1.300"/><circle cx="19" cy="17.500" r="1.800" fill="none" stroke="#8a8535" stroke-width="1.100"/><path d="M15.800 22c.8-1.500 2-2 3.200-2s2.400.5 3.200 2" fill="none" stroke="#8a8535" stroke-width="1.100"/></svg>
<div class="abs" style="left:440px;top:1078px;width:31px;height:2px;background:#8fc4ee"></div>
<div class="abs" style="left:473px;top:1078px;width:6px;height:2px;background:#8fc4ee"></div>
<div class="abs" style="left:636px;top:1078px;width:39px;height:2px;background:#8fc4ee"></div>
<div class="abs" style="left:685px;top:1078px;width:39px;height:2px;background:#8fc4ee"></div>
<div class="abs" style="left:734px;top:1078px;width:39px;height:2px;background:#8fc4ee"></div>
<div class="abs" style="left:783px;top:1078px;width:39px;height:2px;background:#8fc4ee"></div>
<div class="abs" style="left:832px;top:1078px;width:39px;height:2px;background:#8fc4ee"></div>
<div class="abs" style="left:881px;top:1078px;width:31px;height:2px;background:#8fc4ee"></div>
<div class="abs" style="left:914px;top:1078px;width:6px;height:2px;background:#8fc4ee"></div>
<div class="abs" style="left:930px;top:1078px;width:39px;height:2px;background:#8fc4ee"></div>
<div class="abs" style="left:979px;top:1078px;width:39px;height:2px;background:#8fc4ee"></div>
<div class="abs" style="left:1028px;top:1078px;width:39px;height:2px;background:#8fc4ee"></div>
<div class="abs" style="left:1077px;top:1078px;width:39px;height:2px;background:#8fc4ee"></div>
<div class="abs" style="left:1126px;top:1078px;width:39px;height:2px;background:#8fc4ee"></div>
<div class="abs" style="left:1171px;top:1078px;width:48px;height:2px;background:#8fc4ee"></div>
<svg class="abs" style="left:1578px;top:1044px" width="30" height="28" viewBox="0 0 30 28"><path d="M7 23a5 5 0 0 1-.6-10 7 7 0 0 1 13.300-1.500A5.800 5.800 0 0 1 20 23z" fill="#cfdcf1"/><path d="M7 23a5 5 0 0 1-.6-10c2 3 7 5 13.600 10z" fill="#e6eefb"/><circle cx="20.500" cy="5.500" r="5" fill="#e0352b"/><text x="20.500" y="8.600" font-size="8.500" font-weight="bold" fill="#fff" text-anchor="middle" font-family="Liberation Sans,sans-serif">1</text></svg>
<div class="abs tray" style="left:1612px;top:1050px;font-size:14px;letter-spacing:-.3px">18°C</div>
<div class="abs tray" style="left:1650px;top:1050px;font-size:12.500px">มีเมฆมาก</div>
<svg class="abs" style="left:1723px;top:1054px" width="14" height="10" viewBox="0 0 14 10"><path d="M1.500 8L7 2.500 12.500 8" fill="none" stroke="#fff" stroke-width="1.200"/></svg>
<svg class="abs" style="left:1747px;top:1050px" width="14" height="20" viewBox="0 0 14 20"><rect x="4" y="1" width="6" height="11" rx="3" fill="#fff"/><path d="M1.500 9.500a5.500 5.500 0 0 0 11 0M7 15v3M4 18.500h6" fill="none" stroke="#fff" stroke-width="1.200"/></svg>
<div class="abs tray" style="left:1776px;top:1049px;font-size:11.500px">ไทย</div>
<div class="abs tray" style="left:1794px;top:1042px;width:80px;text-align:center;font-size:12px;line-height:18px">4:37 AM<br>1/27/2026</div>
<svg class="abs" style="left:1878px;top:1050px" width="28" height="28" viewBox="0 0 28 28"><path d="M1 1.500h16.500v12.500H6.500l-3 3v-3H1z" fill="#fff"/><path d="M4 4.800h10.500M4 7.800h10.500M4 10.800h10.500" stroke="#1b2c48" stroke-width="1.100"/><circle cx="17" cy="17" r="8.300" fill="#2b3138" stroke="#9aa0a6" stroke-width=".8"/><text x="17" y="21" font-size="11" font-weight="bold" fill="#fff" text-anchor="middle" font-family="Liberation Sans,sans-serif" letter-spacing="-.5">16</text></svg>
<div class="abs" style="left:1914px;top:1040px;width:1px;height:40px;background:#8793a3"></div>

<div class="abs" id="frame-in"></div>
<div class="abs" id="frame-top"></div>
<div class="abs" id="frame-left"></div>
<div class="abs" id="frame-right"></div>
<div class="abs" id="frame-bottom"></div>
</body>
</html>
